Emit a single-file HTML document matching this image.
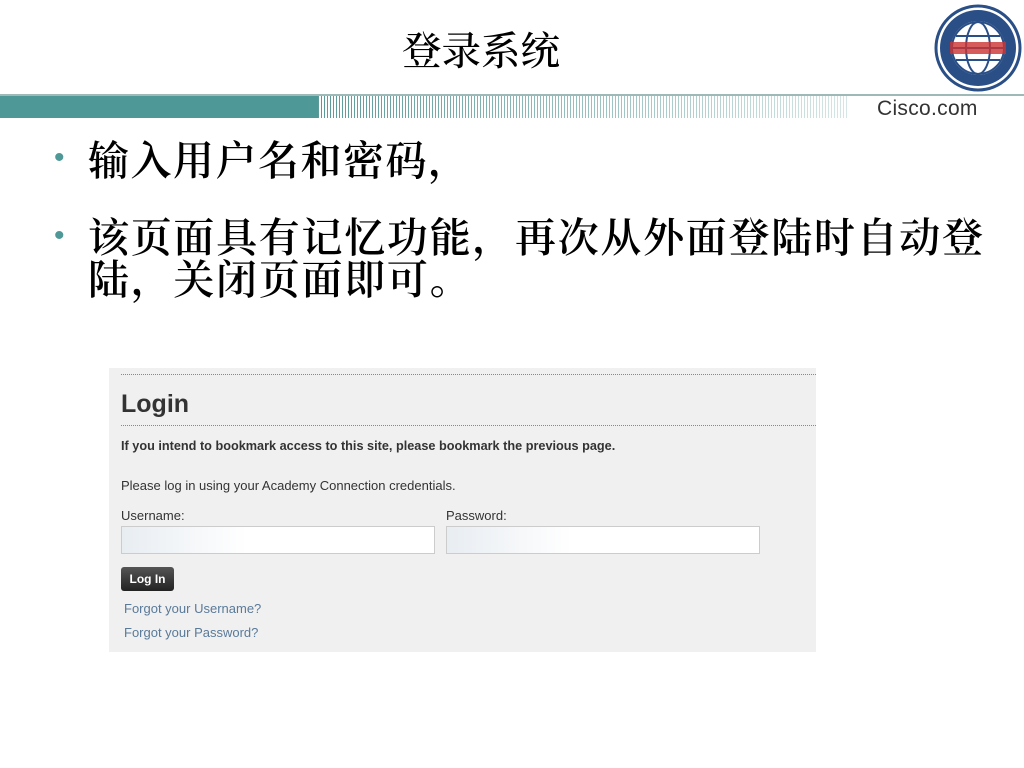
<!DOCTYPE html>
<html><head><meta charset="utf-8"><style>
body{margin:0;width:1024px;height:768px;background:#fff;position:relative;overflow:hidden;font-family:"Liberation Sans","Noto Sans CJK SC",sans-serif}
.abs{position:absolute}
.cn{font-family:"Noto Serif CJK SC",serif;color:#000;font-weight:600}
</style></head><body>
<div class="abs cn" style="left:402px;top:25px;font-size:39.5px;line-height:48px;font-weight:500">登录系统</div>
<div class="abs" style="left:0;top:94px;width:1024px;height:2px;background:#9fb8b8"></div>
<div class="abs" style="left:0;top:96px;width:318px;height:22px;background:#4f9898"></div>
<div class="abs" style="left:318px;top:96px;width:530px;height:22px;background:repeating-linear-gradient(90deg,#5a9a9a 0 1px,transparent 1px 3px);-webkit-mask:linear-gradient(90deg,#000,rgba(0,0,0,.25));mask:linear-gradient(90deg,#000,rgba(0,0,0,.25))"></div>
<div class="abs" style="left:877px;top:97px;font-size:21px;color:#333;letter-spacing:0.3px">Cisco.com</div>
<svg class="abs" style="left:934px;top:2px" width="88" height="90" viewBox="0 0 88 90">
<circle cx="44" cy="46" r="42" fill="#fff" stroke="#2a4f86" stroke-width="3"/>
<circle cx="44" cy="46" r="38" fill="#2a4f86"/>
<circle cx="44" cy="46" r="27" fill="#fff"/>
<ellipse cx="44" cy="46" rx="26" ry="26" fill="none" stroke="#2a4f86" stroke-width="2"/>
<ellipse cx="44" cy="46" rx="12" ry="26" fill="none" stroke="#2a4f86" stroke-width="2"/>
<line x1="18" y1="46" x2="70" y2="46" stroke="#2a4f86" stroke-width="2"/>
<line x1="22" y1="34" x2="66" y2="34" stroke="#2a4f86" stroke-width="2"/>
<line x1="22" y1="58" x2="66" y2="58" stroke="#2a4f86" stroke-width="2"/>
<rect x="16" y="40" width="56" height="12" fill="#c33" opacity=".8"/>
</svg>
<div class="abs" style="left:54px;top:141px;font-size:30px;line-height:34px;color:#4f9898">•</div>
<div class="abs cn" style="left:88px;top:136px;font-size:41px;letter-spacing:1.5px;line-height:44px">输入用户名和密码，</div>
<div class="abs" style="left:54px;top:219px;font-size:30px;line-height:34px;color:#4f9898">•</div>
<div class="abs cn" style="left:88px;top:214px;width:920px;font-size:41px;letter-spacing:1.7px;line-height:42px">该页面具有记忆功能，再次从外面登陆时自动登<br>陆，关闭页面即可。</div>
<div class="abs" style="left:109px;top:368px;width:707px;height:284px;background:#f0f0f0">
<div class="abs" style="left:12px;top:6px;width:695px;border-top:1px dotted #888"></div>
<div class="abs" style="left:12px;top:22px;font-size:25px;font-weight:bold;color:#333">Login</div>
<div class="abs" style="left:12px;top:57px;width:695px;border-top:1px dotted #888"></div>
<div class="abs" style="left:12px;top:71px;font-size:12.7px;font-weight:bold;color:#333">If you intend to bookmark access to this site, please bookmark the previous page.</div>
<div class="abs" style="left:12px;top:110px;font-size:13px;color:#333">Please log in using your Academy Connection credentials.</div>
<div class="abs" style="left:12px;top:140px;font-size:13px;color:#333">Username:</div>
<div class="abs" style="left:337px;top:140px;font-size:13px;color:#333">Password:</div>
<div class="abs" style="left:12px;top:158px;width:312px;height:26px;border:1px solid #ccc;background:linear-gradient(90deg,#e8edf2,#fff 40%)"></div>
<div class="abs" style="left:337px;top:158px;width:312px;height:26px;border:1px solid #ccc;background:linear-gradient(90deg,#e8edf2,#fff 40%)"></div>
<div class="abs" style="left:12px;top:199px;width:53px;height:24px;border-radius:3px;background:linear-gradient(#555,#222);color:#fff;font-size:12px;font-weight:bold;line-height:24px;text-align:center">Log In</div>
<div class="abs" style="left:15px;top:233px;font-size:13px;color:#5a7a9a">Forgot your Username?</div>
<div class="abs" style="left:15px;top:257px;font-size:13px;color:#5a7a9a">Forgot your Password?</div>
</div>
</body></html>
